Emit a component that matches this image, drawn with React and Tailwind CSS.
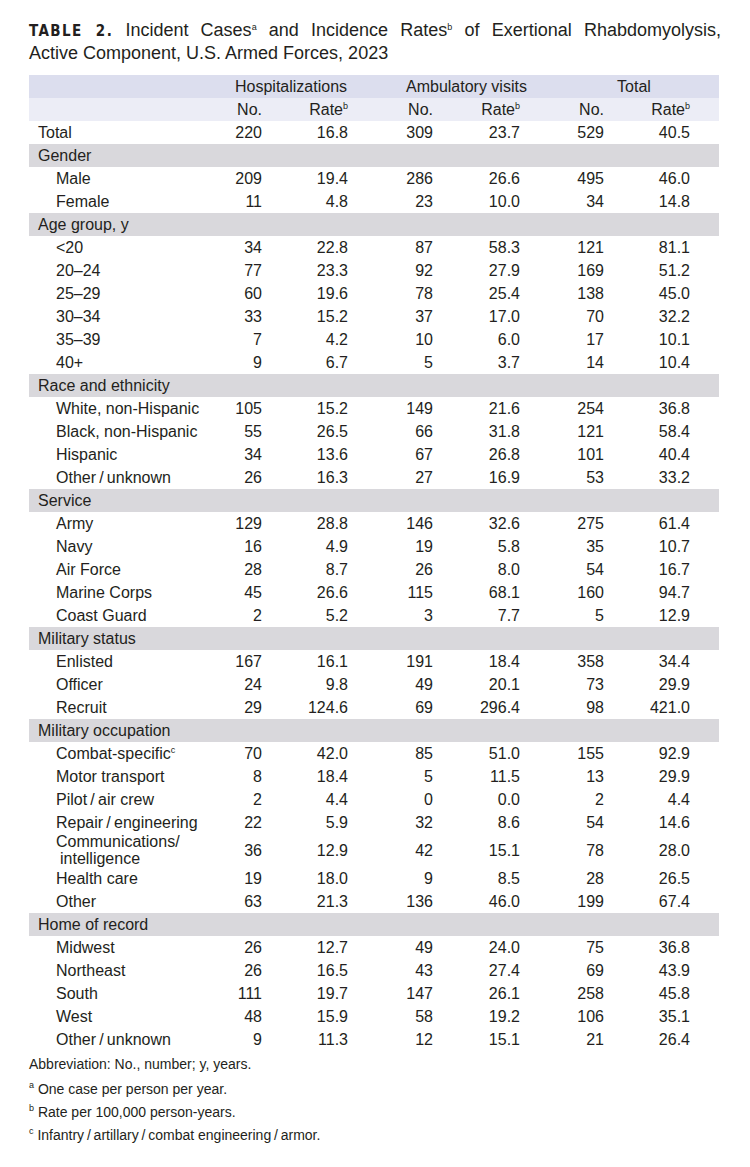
import React from 'react';

const S = '\u2009/\u2009';

// [label, hospNo, hospRate, ambNo, ambRate, totNo, totRate] or a section heading
const rows = [
    { label: 'Total', top: true, v: ['220', '16.8', '309', '23.7', '529', '40.5'] },
    { section: 'Gender' },
    { label: 'Male', v: ['209', '19.4', '286', '26.6', '495', '46.0'] },
    { label: 'Female', v: ['11', '4.8', '23', '10.0', '34', '14.8'] },
    { section: 'Age group, y' },
    { label: '<20', v: ['34', '22.8', '87', '58.3', '121', '81.1'] },
    { label: '20–24', v: ['77', '23.3', '92', '27.9', '169', '51.2'] },
    { label: '25–29', v: ['60', '19.6', '78', '25.4', '138', '45.0'] },
    { label: '30–34', v: ['33', '15.2', '37', '17.0', '70', '32.2'] },
    { label: '35–39', v: ['7', '4.2', '10', '6.0', '17', '10.1'] },
    { label: '40+', v: ['9', '6.7', '5', '3.7', '14', '10.4'] },
    { section: 'Race and ethnicity' },
    { label: 'White, non-Hispanic', v: ['105', '15.2', '149', '21.6', '254', '36.8'] },
    { label: 'Black, non-Hispanic', v: ['55', '26.5', '66', '31.8', '121', '58.4'] },
    { label: 'Hispanic', v: ['34', '13.6', '67', '26.8', '101', '40.4'] },
    { label: `Other${S}unknown`, v: ['26', '16.3', '27', '16.9', '53', '33.2'] },
    { section: 'Service' },
    { label: 'Army', v: ['129', '28.8', '146', '32.6', '275', '61.4'] },
    { label: 'Navy', v: ['16', '4.9', '19', '5.8', '35', '10.7'] },
    { label: 'Air Force', v: ['28', '8.7', '26', '8.0', '54', '16.7'] },
    { label: 'Marine Corps', v: ['45', '26.6', '115', '68.1', '160', '94.7'] },
    { label: 'Coast Guard', v: ['2', '5.2', '3', '7.7', '5', '12.9'] },
    { section: 'Military status' },
    { label: 'Enlisted', v: ['167', '16.1', '191', '18.4', '358', '34.4'] },
    { label: 'Officer', v: ['24', '9.8', '49', '20.1', '73', '29.9'] },
    { label: 'Recruit', v: ['29', '124.6', '69', '296.4', '98', '421.0'] },
    { section: 'Military occupation' },
    { label: 'Combat-specific', sup: 'c', v: ['70', '42.0', '85', '51.0', '155', '92.9'] },
    { label: 'Motor transport', v: ['8', '18.4', '5', '11.5', '13', '29.9'] },
    { label: `Pilot${S}air crew`, v: ['2', '4.4', '0', '0.0', '2', '4.4'] },
    { label: `Repair${S}engineering`, v: ['22', '5.9', '32', '8.6', '54', '14.6'] },
    { label: 'comm', tall: true, v: ['36', '12.9', '42', '15.1', '78', '28.0'] },
    { label: 'Health care', v: ['19', '18.0', '9', '8.5', '28', '26.5'] },
    { label: 'Other', v: ['63', '21.3', '136', '46.0', '199', '67.4'] },
    { section: 'Home of record' },
    { label: 'Midwest', v: ['26', '12.7', '49', '24.0', '75', '36.8'] },
    { label: 'Northeast', v: ['26', '16.5', '43', '27.4', '69', '43.9'] },
    { label: 'South', v: ['111', '19.7', '147', '26.1', '258', '45.8'] },
    { label: 'West', v: ['48', '15.9', '58', '19.2', '106', '35.1'] },
    { label: `Other${S}unknown`, v: ['9', '11.3', '12', '15.1', '21', '26.4'] },
];

const GRID = 'grid grid-cols-[147px_86px_86px_85px_87px_84px_86px] pr-[29px]';

const Sup = ({ children }) => (
    <span className="text-[9px] align-[6px] leading-none">{children}</span>
);

const Row = ({ row }) => {
    if (row.section) {
        return (
            <div className="h-[23px] bg-[#d9d8dc] flex items-center pl-[9px]">{row.section}</div>
        );
    }
    const label = row.label === 'comm' ? (
        <div className="leading-[16.5px]">
            Communications/
            <br />
            <span className="pl-[4px]">intelligence</span>
        </div>
    ) : (
        <span>
            {row.label}
            {row.sup && <Sup>{row.sup}</Sup>}
        </span>
    );
    return (
        <div className={`${GRID} ${row.tall ? 'h-[33px]' : 'h-[23px]'} items-center`}>
            <div className={`${row.top ? 'pl-[9px]' : 'pl-[27px]'} whitespace-nowrap`}>{label}</div>
            {row.v.map((n, i) => (
                <div key={i} className="text-right">{n}</div>
            ))}
        </div>
    );
};

export default function App() {
    return (
        <div className="w-[750px] min-h-[1167px] bg-white text-[#231f20] font-['Liberation_Sans',Arial,sans-serif] text-[16px] leading-[23px]">
            {/* Title */}
            <div className="pt-[19px] px-[29px] text-[18px] leading-[22px]">
                <div className="text-justify [text-align-last:justify]">
                    <span className="font-['DejaVu_Sans_Condensed','DejaVu_Sans',sans-serif] font-bold text-[15px] tracking-[1.4px]">TABLE 2.</span>{' '}
                    Incident Cases<Sup>a</Sup> and Incidence Rates<Sup>b</Sup> of Exertional Rhabdomyolysis,
                </div>
                <div>Active Component, U.S. Armed Forces, 2023</div>
            </div>

            {/* Table */}
            <div className="mt-[11px] ml-[29px] w-[690px]">
                <div className={`${GRID} h-[23px] items-center bg-[#dcdeee]`}>
                    <div />
                    <div className="col-span-2 pl-[58px] text-center">Hospitalizations</div>
                    <div className="col-span-2 pl-[58px] text-center whitespace-nowrap">Ambulatory visits</div>
                    <div className="col-span-2 pl-[58px] text-center">Total</div>
                </div>
                <div className={`${GRID} h-[23px] items-center bg-[#ecedf6]`}>
                    <div />
                    {[0, 1, 2].map((k) => (
                        <React.Fragment key={k}>
                            <div className="text-right">No.</div>
                            <div className="text-right">
                                Rate<Sup>b</Sup>
                            </div>
                        </React.Fragment>
                    ))}
                </div>
                {rows.map((r, i) => (
                    <Row key={i} row={r} />
                ))}
            </div>

            {/* Footnotes */}
            <div className="px-[29px] pt-[2px] text-[14px] leading-[23px]">
                <div className="mb-[2px]">Abbreviation: No., number; y, years.</div>
                <div>
                    <Sup>a</Sup> One case per person per year.
                </div>
                <div>
                    <Sup>b</Sup> Rate per 100,000 person-years.
                </div>
                <div>
                    <Sup>c</Sup> Infantry{S}artillary{S}combat engineering{S}armor.
                </div>
            </div>
        </div>
    );
}
